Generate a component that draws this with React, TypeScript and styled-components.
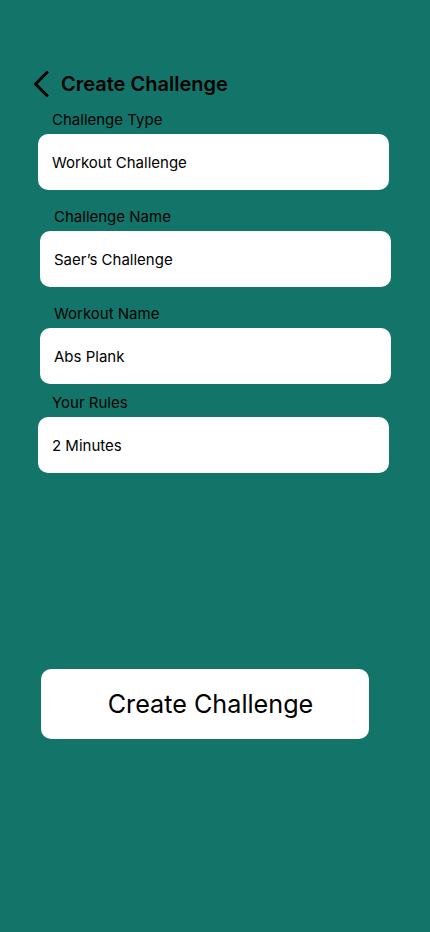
import React from "react";
import styled, { createGlobalStyle } from "styled-components";

const Global = createGlobalStyle`
  html, body { margin: 0; padding: 0; background: #13756a; }
  body { font-family: Inter, "Noto Sans", sans-serif; color: #000; }
  * { box-sizing: border-box; }
`;

const Page = styled.div`
  width: 430px;
  min-height: 932px;
  background: #13756a;
  display: flex;
  flex-direction: column;
  padding-top: 70px;
`;

const Header = styled.div`
  display: flex;
  align-items: center;
  gap: 11px;
  padding-left: 32px;
  height: 28px;
`;

const BackButton = styled.button`
  background: none;
  border: none;
  padding: 0;
  width: 18px;
  height: 26px;
  display: flex;
  align-items: center;
  cursor: pointer;
`;

const Title = styled.h1`
  margin: 0;
  font-size: 20px;
  font-weight: 600;
  line-height: 28px;
  color: #000;
`;

const Group = styled.div<{ $top: number; $left: number }>`
  display: flex;
  flex-direction: column;
  gap: 5px;
  margin-top: ${(p) => p.$top}px;
  margin-left: ${(p) => p.$left}px;
  width: 351px;
`;

const Label = styled.label`
  font-size: 15px;
  line-height: 18px;
  padding-left: 14px;
  color: #000;
`;

const Field = styled.div`
  height: 56px;
  background: #fff;
  border-radius: 10px;
  display: flex;
  align-items: center;
  padding-left: 14px;
  font-size: 15px;
  color: #000;
`;

const ButtonWrap = styled.div`
  margin-top: 196px;
  margin-left: 41px;
`;

const CreateButton = styled.button`
  width: 328px;
  height: 70px;
  background: #fff;
  border: none;
  border-radius: 10px;
  padding: 0 0 0 11px;
  font-family: Inter, "Noto Sans", sans-serif;
  font-size: 25.2px;
  color: #000;
  cursor: pointer;
`;

const fields = [
  { label: "Challenge Type", value: "Workout Challenge", top: 13, left: 38 },
  { label: "Challenge Name", value: "Saer\u2019s Challenge", top: 18, left: 40 },
  { label: "Workout Name", value: "Abs Plank", top: 18, left: 40 },
  { label: "Your Rules", value: "2 Minutes", top: 10, left: 38 },
];

export default function App() {
  return (
    <Page>
      <Global />
      <Header>
        <BackButton aria-label="Back">
          <svg width="18" height="26" viewBox="0 0 18 26" fill="none">
            <path d="M15 1.5 L3.5 13 L15 24.5" stroke="#000" strokeWidth="3" strokeLinecap="round" strokeLinejoin="round" />
          </svg>
        </BackButton>
        <Title>Create Challenge</Title>
      </Header>
      {fields.map((f) => (
        <Group key={f.label} $top={f.top} $left={f.left}>
          <Label>{f.label}</Label>
          <Field>{f.value}</Field>
        </Group>
      ))}
      <ButtonWrap>
        <CreateButton>Create Challenge</CreateButton>
      </ButtonWrap>
    </Page>
  );
}
